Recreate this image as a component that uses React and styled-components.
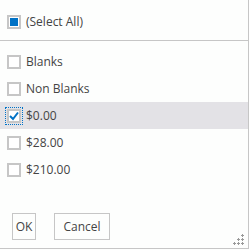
import React from 'react';
import styled, { createGlobalStyle } from 'styled-components';

const GlobalStyle = createGlobalStyle`
	body {
		margin: 0;
		background: #fdfefd;
		font-family: "Open Sans", "Noto Sans", sans-serif;
	}
`;

const Panel = styled.div`
	width: 249px;
	height: 249px;
	box-sizing: border-box;
	border-right: 1px solid #c6c6c6;
	border-bottom: 1px solid #c6c6c6;
	background: #fdfefd;
	display: flex;
	flex-direction: column;
	position: relative;
`;

const Header = styled.div`
	height: 41px;
	padding-top: 8px;
	box-sizing: border-box;
	border-bottom: 1px solid #c6c6c6;
`;

const List = styled.div`
	padding-top: 7px;
	display: flex;
	flex-direction: column;
`;

const Row = styled.div`
	height: 27px;
	display: flex;
	align-items: center;
	padding-left: 8px;
	gap: 6px;
	background: ${props => props.selected ? '#e3e2e6' : 'transparent'};
	font-size: 12px;
	color: #444;
`;

const Focus = styled.span`
	display: flex;
	margin: -2px;
	padding: 1px;
	outline: ${props => props.focused ? '1px dotted #0072c6' : 'none'};
	outline-offset: 0;
`;

const Box = styled.span`
	width: 14px;
	height: 14px;
	box-sizing: border-box;
	border: 2px solid #c6c6c6;
	background: #fff;
	display: flex;
	align-items: center;
	justify-content: center;
`;

const Partial = styled.span`
	width: 8px;
	height: 8px;
	background: #0072c6;
`;

const Footer = styled.div`
	margin-top: auto;
	padding: 0 0 8px 12px;
	display: flex;
	gap: 18px;
`;

const Button = styled.button`
	height: 27px;
	width: ${props => props.wide ? '56px' : '24px'};
	padding: 0;
	box-sizing: border-box;
	border: 1px solid #c6c6c6;
	background: #fdfefd;
	color: #444;
	font-family: inherit;
	font-size: 12px;
`;

const Grip = styled.svg`
	position: absolute;
	right: 4px;
	bottom: 3px;
`;

const items = [
	{ label: 'Blanks' },
	{ label: 'Non Blanks' },
	{ label: '$0.00', checked: true },
	{ label: '$28.00' },
	{ label: '$210.00' }
];

const Check = () => (
	<svg width="10" height="10" viewBox="0 0 10 10">
		<path d="M1 5 L4 8 L9 1.5" fill="none" stroke="#0072c6" strokeWidth="2" />
	</svg>
);

const Checkbox = ({ checked, partial, focused }) => (
	<Focus focused={focused}>
		<Box>
			{partial && <Partial />}
			{checked && <Check />}
		</Box>
	</Focus>
);

const App = () => {
	const grip = [[8, 0], [4, 4], [8, 4], [0, 8], [4, 8], [8, 8]];

	return (
		<Panel>
			<GlobalStyle />
			<Header>
				<Row>
					<Checkbox partial />
					(Select All)
				</Row>
			</Header>
			<List>
				{items.map(item => (
					<Row key={item.label} selected={item.checked}>
						<Checkbox checked={item.checked} focused={item.checked} />
						{item.label}
					</Row>
				))}
			</List>
			<Footer>
				<Button>OK</Button>
				<Button wide>Cancel</Button>
			</Footer>
			<Grip width="11" height="11" viewBox="0 0 11 11">
				{grip.map(([x, y]) => (
					<path key={x + '-' + y} d={`M${x + 1} ${y} h1 v1 h1 v1 h-1 v1 h-1 v-1 h-1 v-1 h1 z`} fill="#999" />
				))}
			</Grip>
		</Panel>
	);
};

export default App;
